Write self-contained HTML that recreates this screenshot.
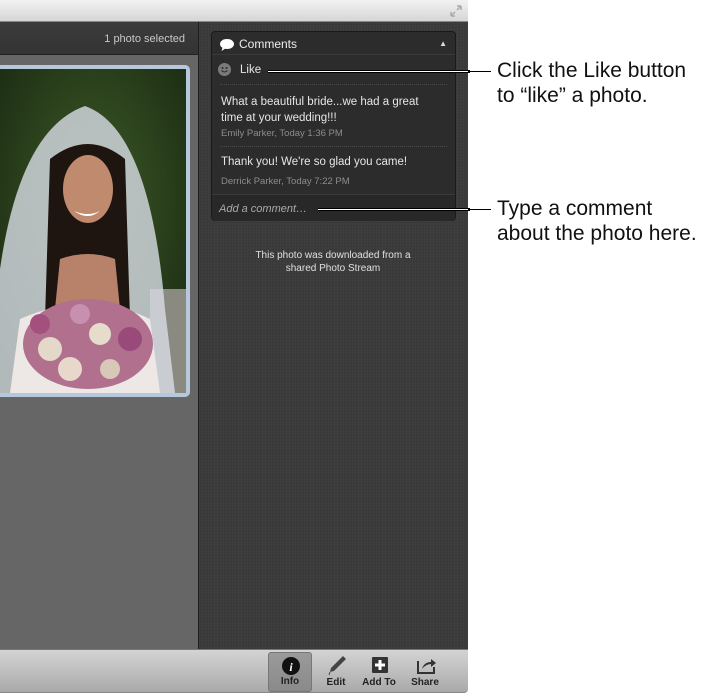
<!DOCTYPE html>
<html><head><meta charset="utf-8"><style>
*{margin:0;padding:0;box-sizing:border-box}
body{width:710px;height:696px;background:#fff;position:relative;overflow:hidden;font-family:"Liberation Sans",sans-serif}
.abs{position:absolute}
#top{left:0;top:0;width:468px;height:22px;background:linear-gradient(#f2f2f2,#d6d6d6);border-bottom:1px solid #888}
#hdr{left:0;top:22px;width:198px;height:33px;background:linear-gradient(#3c3c3c,#333);border-bottom:1px solid #222;color:#c8c8c8;font-size:11px;text-align:right;padding:11px 13px 0 0}
#left{left:0;top:55px;width:198px;height:594px;background:#666}
#right{left:198px;top:22px;width:270px;height:627px;background:#3b3b3b;border-left:1px solid #1e1e1e;background-image:repeating-linear-gradient(90deg,rgba(255,255,255,.02) 0 1px,transparent 1px 3px),repeating-linear-gradient(0deg,rgba(0,0,0,.05) 0 1px,transparent 1px 3px)}
#box{left:211px;top:31px;width:245px;height:190px;background:#2c2c2c;border:1px solid #1a1a1a;border-radius:4px;color:#e6e6e6;font-size:11.5px}
.sep{position:absolute;left:8px;right:8px;border-top:1px dotted #4c4c4c}
#bot{left:0;top:649px;width:468px;height:44px;background:linear-gradient(#d4d4d4,#a9a9a9);border-top:1px solid #777;border-bottom:1px solid #888;border-radius:0 0 4px 0}
.tb{position:absolute;top:0;width:44px;height:40px;text-align:center;font-size:10px;font-weight:bold;color:#222}
.tb span{position:absolute;bottom:4px;left:0;right:0}
.ann{left:497px;font-size:21px;line-height:25px;color:#111}
</style></head><body>
<div id="top" class="abs"></div>
<svg class="abs" style="left:449px;top:4px" width="14" height="14" viewBox="0 0 14 14"><path d="M2 12 L6 8 M2 12 V8 M2 12 H6 M12 2 L8 6 M12 2 V6 M12 2 H8" stroke="#aaa" stroke-width="1.5" fill="none"/></svg>
<div id="hdr" class="abs">1 photo selected</div>
<div id="left" class="abs"></div>
<div class="abs" style="left:-4px;top:65px;width:194px;height:332px;background:#b8c8dc;border-radius:5px"></div>
<svg class="abs" style="left:0;top:69px" width="186" height="324" viewBox="0 0 186 324">
<defs><radialGradient id="g" cx=".5" cy=".4" r=".7"><stop offset="0" stop-color="#3d5a28"/><stop offset="1" stop-color="#1a2a12"/></radialGradient></defs>
<rect width="186" height="324" fill="url(#g)"/>
<rect x="150" y="220" width="36" height="104" fill="#8a8a80"/>
<path d="M0 200 Q20 60 85 37 Q150 60 165 240 L175 324 L0 324Z" fill="#d8dde6" opacity=".8"/>
<path d="M50 90 Q88 60 125 90 L130 250 L45 250Z" fill="#1e1510"/>
<ellipse cx="88" cy="120" rx="25" ry="34" fill="#c08a6e"/>
<path d="M74 142 Q88 152 100 142 Q88 148 74 142Z" fill="#fff"/>
<path d="M20 250 Q88 220 150 250 L160 324 L10 324Z" fill="#ede8e6"/>
<path d="M60 190 Q88 180 115 190 L120 240 L55 240Z" fill="#b8826a"/>
<ellipse cx="88" cy="275" rx="65" ry="45" fill="#b0708e"/>
<circle cx="50" cy="280" r="12" fill="#e4d8c8"/><circle cx="100" cy="265" r="11" fill="#e6dccc"/><circle cx="70" cy="300" r="12" fill="#e8d8cc"/><circle cx="110" cy="300" r="10" fill="#d8c8b8"/><circle cx="130" cy="270" r="12" fill="#9a4a7a"/><circle cx="40" cy="255" r="10" fill="#a4507e"/><circle cx="80" cy="245" r="10" fill="#c890b0"/>
</svg>
<div id="right" class="abs"></div>
<div id="box" class="abs">
<svg class="abs" style="left:7px;top:6px" width="16" height="14" viewBox="0 0 16 14"><path d="M8 1C3.5 1 1 3.5 1 6c0 1.6 1 3 2.5 3.8L2.5 13 6 10.8c.6.1 1.3.2 2 .2 4.5 0 7-2.5 7-5S12.5 1 8 1Z" fill="#fff"/></svg>
<div class="abs" style="left:27px;top:5px;font-size:12px;color:#eee">Comments</div>
<div class="abs" style="right:8px;top:7px;font-size:8px;color:#ddd">▲</div>
<div class="abs" style="left:0;right:0;top:22px;border-top:1px solid #3a3a3a"></div>
<svg class="abs" style="left:6px;top:31px" width="13" height="13" viewBox="0 0 13 13"><circle cx="6.5" cy="6.5" r="6.5" fill="#7a7a7a"/><circle cx="4.5" cy="5" r="1" fill="#2c2c2c"/><circle cx="8.5" cy="5" r="1" fill="#2c2c2c"/><path d="M3.5 7.5Q6.5 10.5 9.5 7.5" stroke="#2c2c2c" fill="none"/></svg>
<div class="abs" style="left:28px;top:32px">Like</div>
<div class="sep" style="top:52px"></div>
<div class="abs" style="left:9px;top:62px;line-height:16px">What a beautiful bride...we had a great<br>time at your wedding!!!</div>
<div class="abs" style="left:9px;top:96px;font-size:9.5px;color:#8c8c8c">Emily Parker, Today 1:36 PM</div>
<div class="sep" style="top:114px"></div>
<div class="abs" style="left:9px;top:124px">Thank you! We're so glad you came!</div>
<div class="abs" style="left:9px;top:144px;font-size:9.5px;color:#8c8c8c">Derrick Parker, Today 7:22 PM</div>
<div class="abs" style="left:0;right:0;top:162px;height:27px;background:#282828;border-top:1px solid #3a3a3a;border-radius:0 0 4px 4px"></div>
<div class="abs" style="left:7px;top:171px;font-style:italic;color:#aaa;font-size:11px">Add a comment…</div>
</div>
<div class="abs" style="left:241px;top:249px;width:184px;text-align:center;color:#e0e0e0;font-size:10px;line-height:13px">This photo was downloaded from a shared Photo Stream</div>
<div class="abs" style="left:268px;top:70px;width:202px;height:3px;background:#fff;border-top:1px solid #000;border-bottom:1px solid #000"></div>
<div class="abs" style="left:468px;top:71px;width:23px;height:1px;background:#000"></div>
<div class="abs" style="left:318px;top:208px;width:152px;height:3px;background:#fff;border-top:1px solid #000;border-bottom:1px solid #000"></div>
<div class="abs" style="left:468px;top:209px;width:23px;height:1px;background:#000"></div>
<div class="abs ann" style="top:58px">Click the Like button<br>to “like” a photo.</div>
<div class="abs ann" style="top:196px">Type a comment<br>about the photo here.</div>
<div id="bot" class="abs">
<div class="tb" style="left:268px;top:2px;background:linear-gradient(#9a9a9a,#8a8a8a);border:1px solid #777;border-radius:3px"><svg class="abs" style="left:13px;top:4px" width="18" height="18"><circle cx="9" cy="9" r="9" fill="#111"/><text x="9" y="14" font-size="12" fill="#fff" text-anchor="middle" font-style="italic" font-weight="bold" font-family="Liberation Serif">i</text></svg><span>Info</span></div>
<div class="tb" style="left:314px;top:2px"><svg class="abs" style="left:12px;top:2px" width="22" height="22" viewBox="0 0 22 22"><path d="M17 2l3 3L8 17l-4 1 1-4Z" fill="#444"/><path d="M4 18l-1 3" stroke="#444"/></svg><span>Edit</span></div>
<div class="tb" style="left:357px;top:2px"><svg class="abs" style="left:15px;top:5px" width="16" height="16"><rect width="16" height="16" rx="1" fill="#333"/><path d="M8 3v10M3 8h10" stroke="#fff" stroke-width="3"/></svg><span>Add To</span></div>
<div class="tb" style="left:403px;top:2px"><svg class="abs" style="left:13px;top:3px" width="22" height="20" viewBox="0 0 22 20"><path d="M2 6v12h16v-6" stroke="#333" stroke-width="2" fill="none"/><path d="M6 14q2-7 9-7V4l5 4-5 4V9q-5 0-9 5Z" fill="#333"/></svg><span>Share</span></div>
</div>
</body></html>
